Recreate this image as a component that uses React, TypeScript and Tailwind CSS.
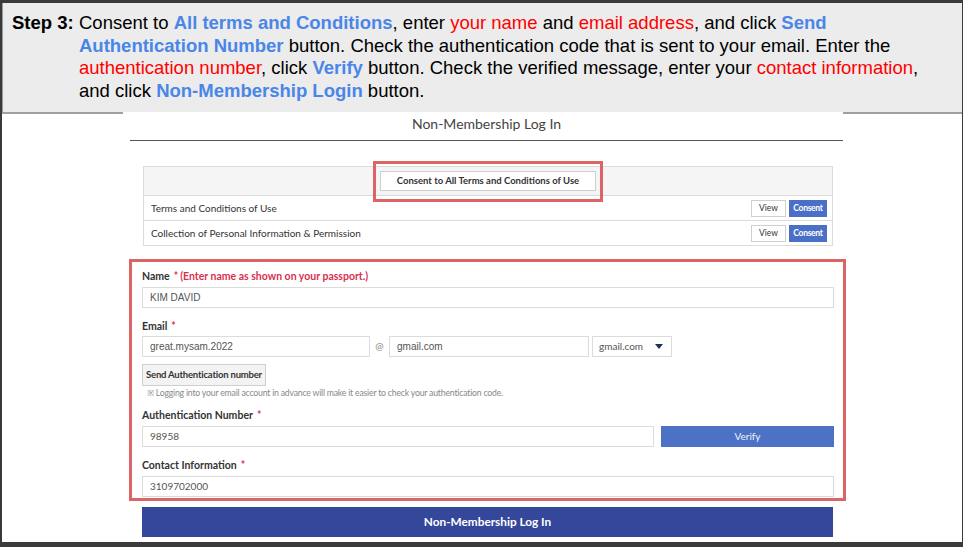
import React from 'react';

const blue = 'text-[#4a86e8] font-bold';
const red = 'text-[#ff0000]';

function Label({ text, note }: { text: string; note?: string }) {
  return (
    <div className="h-[14px] leading-[14px] text-[10.5px] font-bold text-[#333]">
      {text}
      <span className="text-[#d9304f] ml-[4px]">*</span>
      {note && <span className="text-[#d9304f] ml-[2px]">{note}</span>}
    </div>
  );
}

function Field({ value, className = '', arial = false }: { value: string; className?: string; arial?: boolean }) {
  return (
    <div
      className={`h-[21px] border border-[#dcdcdc] bg-white flex items-center pl-[7px] text-[10px] text-[#555] ${
        arial ? "font-['Liberation_Sans',sans-serif]" : ''
      } ${className}`}
    >
      {value}
    </div>
  );
}

export default function App() {
  return (
    <div className="w-[963px] h-[547px] bg-[#3a3a3a] pt-[3px] pl-[2px] pr-px pb-[5px]">
      <div className="h-full bg-white flex flex-col overflow-hidden">
        {/* ===== INSTRUCTION BOX ===== */}
        <div className="h-[109px] bg-[#ececec] border-l border-[#9a9a9a] pl-[9px] pt-[9px] flex font-['Liberation_Sans',Arial,sans-serif] text-[18.5px] leading-[22.7px] text-black">
          <div className="font-bold w-[67px] shrink-0">Step 3:</div>
          <div className="w-[862px]">
            Consent to <span className={blue}>All terms and Conditions</span>, enter{' '}
            <span className={red}>your name</span> and <span className={red}>email address</span>, and
            click <span className={blue}>Send Authentication Number</span> button. Check the authentication
            code that is sent to your email. Enter the <span className={red}>authentication number</span>,
            click <span className={blue}>Verify</span> button. Check the verified message, enter your{' '}
            <span className={red}>contact information</span>, and click{' '}
            <span className={blue}>Non-Membership Login</span> button.
          </div>
        </div>
        <div className="flex h-[2px]">
          <div className="w-[121px] bg-[#a0a0a0]" />
          <div className="w-[720px]" />
          <div className="flex-1 bg-[#a0a0a0]" />
        </div>

        {/* ===== SCREENSHOT ===== */}
        <div className="ml-[121px] w-[724px] font-['Lato',sans-serif]">
          <div className="ml-[7px] w-[713px] h-[20px] leading-[20px] text-center text-[14px] text-[#444]">
            Non-Membership Log In
          </div>
          <div className="ml-[7px] w-[713px] h-px mt-[6px] bg-[#555]" />

          {/* Terms */}
          <div className="relative ml-[20px] w-[690px] mt-[25px] border border-[#dcdcdc] text-[10px] text-[#333]">
            <div className="h-[28px] bg-[#f5f5f5] flex items-center justify-center">
              <div className="w-[216px] h-[20px] border border-[#cfcfcf] bg-white flex items-center justify-center text-[9.5px] font-bold text-[#333]">
                Consent to All Terms and Conditions of Use
              </div>
            </div>
            <div className="absolute left-[229px] top-[-6px] w-[230px] h-[41px] border-[3px] border-[#dc6464]" />
            {['Terms and Conditions of Use', 'Collection of Personal Information & Permission'].map((t) => (
              <div key={t} className="h-[25px] border-t border-[#dcdcdc] flex items-center pl-[7px] pr-[5px]">
                <span className="flex-1">{t}</span>
                <div className="w-[35px] h-[17px] border border-[#cfcfcf] bg-white flex items-center justify-center text-[8.5px]">
                  View
                </div>
                <div className="w-[38px] h-[17px] ml-[3px] bg-[#4a6fc6] flex items-center justify-center text-[8.5px] font-bold text-white tracking-[-0.3px]">
                  Consent
                </div>
              </div>
            ))}
          </div>

          {/* Form */}
          <div className="ml-[6px] w-[717px] mt-[13px] border-[3px] border-[#dc6464] pl-[10px] pr-[9px] pt-[7px] pb-px">
            <Label text="Name" note="(Enter name as shown on your passport.)" />
            <Field value="KIM DAVID" className="mt-[4px]" arial />

            <div className="mt-[11px]">
              <Label text="Email" />
            </div>
            <div className="mt-[3px] flex items-center">
              <Field value="great.mysam.2022" className="w-[228px]" arial />
              <span className="w-[19px] text-center text-[10px] text-[#888]">@</span>
              <Field value="gmail.com" className="w-[200px]" arial />
              <div className="ml-[3px] w-[80px] h-[21px] border border-[#dcdcdc] flex items-center pl-[6px] pr-[8px] text-[10px] text-[#555]">
                <span className="flex-1">gmail.com</span>
                <svg width="8" height="5" viewBox="0 0 8 5">
                  <path d="M0 0h8L4 5z" fill="#1f2f55" />
                </svg>
              </div>
            </div>
            <div className="mt-[7px] w-[124px] h-[22px] border border-[#cfcfcf] bg-[#f3f3f3] flex items-center justify-center text-[9.5px] font-bold text-[#333] tracking-[-0.2px]">
              Send Authentication number
            </div>
            <div className="mt-[2px] h-[10px] leading-[10px] pl-[5px] text-[8.7px] text-[#888] tracking-[-0.2px]">
              ※ Logging into your email account in advance will make it easier to check your authentication code.
            </div>

            <div className="mt-[10px]">
              <Label text="Authentication Number" />
            </div>
            <div className="mt-[4px] flex gap-[7px]">
              <Field value="98958" className="w-[512px]" />
              <div className="flex-1 h-[21px] bg-[#4d72c5] flex items-center justify-center text-[10px] text-[#eef2fb]">
                Verify
              </div>
            </div>

            <div className="mt-[11px]">
              <Label text="Contact Information" />
            </div>
            <Field value="3109702000" className="mt-[4px]" />
          </div>

          <div className="ml-[19px] w-[691px] mt-[6px] h-[30px] bg-[#34479a] flex items-center justify-center text-[11.8px] font-bold text-white">
            Non-Membership Log In
          </div>
        </div>
      </div>
    </div>
  );
}
